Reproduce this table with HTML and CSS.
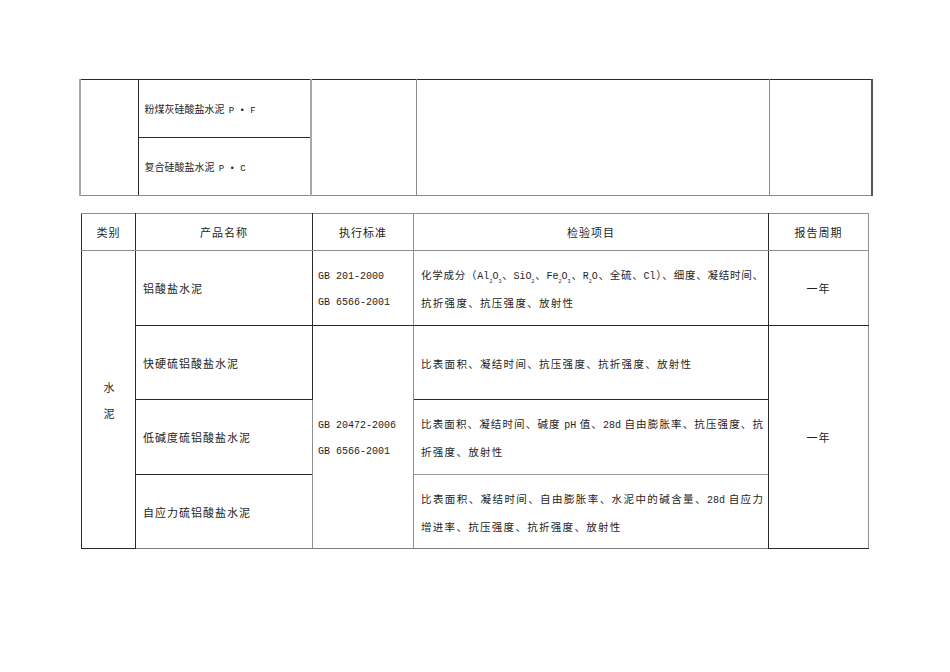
FILE: index.html
```html
<!DOCTYPE html>
<html lang="zh-CN">
<head>
<meta charset="utf-8">
<title>水泥检验项目</title>
<link rel="stylesheet" href="styles.css">
</head>
<body>
<div class="page">
  <table class="t1">
    <colgroup>
      <col class="c1a"><col class="c1b"><col class="c1c"><col class="c1d"><col class="c1e">
    </colgroup>
    <tr class="r1">
      <td rowspan="2" class="gl"></td>
      <td class="name1 bb-dark">粉煤灰硅酸盐水泥 <span class="en">P&nbsp;•&nbsp;F</span></td>
      <td rowspan="2" class="gl gr"></td>
      <td rowspan="2" class="gr"></td>
      <td rowspan="2" class="rthick"></td>
    </tr>
    <tr class="r1">
      <td class="name1">复合硅酸盐水泥 <span class="en">P&nbsp;•&nbsp;C</span></td>
    </tr>
  </table>

  <table class="t2">
    <colgroup>
      <col class="c2a"><col class="c2b"><col class="c2c"><col class="c2d"><col class="c2e">
    </colgroup>
    <tr class="hdr">
      <th>类别</th>
      <th>产品名称</th>
      <th class="gr">执行标准</th>
      <th>检验项目</th>
      <th class="rgray">报告周期</th>
    </tr>
    <tr class="row ra">
      <td rowspan="4" class="cat"><div>水</div><div>泥</div></td>
      <td class="name">铝酸盐水泥</td>
      <td class="std gr"><div>GB 201-2000</div><div>GB 6566-2001</div></td>
      <td class="items">
        <div class="jl">化学成分（<span class="en">Al<sub>2</sub>O<sub>3</sub></span>、<span class="en">SiO<sub>2</sub></span>、<span class="en">Fe<sub>2</sub>O<sub>3</sub></span>、<span class="en">R<sub>2</sub>O</span>、全硫、<span class="en">Cl</span>）、细度、凝结时间、</div>
        <div>抗折强度、抗压强度、放射性</div>
      </td>
      <td class="period rgray">一年</td>
    </tr>
    <tr class="row rb">
      <td class="name">快硬硫铝酸盐水泥</td>
      <td rowspan="3" class="std gr gbot"><div>GB 20472-2006</div><div>GB 6566-2001</div></td>
      <td class="items">
        <div>比表面积、凝结时间、抗压强度、抗折强度、放射性</div>
      </td>
      <td rowspan="3" class="period rgray">一年</td>
    </tr>
    <tr class="row ra">
      <td class="name">低碱度硫铝酸盐水泥</td>
      <td class="items bb-gray">
        <div class="jl">比表面积、凝结时间、碱度 <span class="en">pH</span> 值、<span class="en">28d</span> 自由膨胀率、抗压强度、抗</div>
        <div>折强度、放射性</div>
      </td>
    </tr>
    <tr class="row rb">
      <td class="name">自应力硫铝酸盐水泥</td>
      <td class="items">
        <div class="jl">比表面积、凝结时间、自由膨胀率、水泥中的碱含量、<span class="en">28d</span> 自应力</div>
        <div>增进率、抗压强度、抗折强度、放射性</div>
      </td>
    </tr>
  </table>
</div>
</body>
</html>
```

FILE: styles.css
```css
html, body {
  margin: 0;
  padding: 0;
  background: #ffffff;
}

body {
  font-family: "Noto Sans CJK SC", sans-serif;
  color: #1e1e1e;
  font-size: 11px;
}

.page {
  padding-top: 79px;
}

table {
  border-collapse: collapse;
  table-layout: fixed;
}

td, th {
  border: 1px solid #2a2a2a;
  padding: 0;
  vertical-align: middle;
  font-weight: normal;
}

.en {
  font-family: "Liberation Mono", monospace;
  font-size: 10px;
  letter-spacing: 0;
}

sub {
  font-size: 5px;
  vertical-align: -4px;
  line-height: 0;
}

/* ---------- first table ---------- */
.t1 {
  margin-left: 79px;
  width: 792px;
}

.c1a { width: 58px; }
.c1b { width: 173px; }
.c1c { width: 105px; }
.c1d { width: 353px; }
.c1e { width: 103px; }

.t1 tr.r1 { height: 58px; }

.t1 td {
  border-bottom-color: #8a8a8a;
}

.name1 {
  padding-left: 6px;
  font-size: 10px;
  letter-spacing: 0;
}

.name1 .en {
  font-size: 9px;
  margin-left: 2px;
}

.t1 .bb-dark {
  border-bottom-color: #2a2a2a;
}

.gl { border-left: 2px solid #a8a8a8; }
.t1 .gr { border-right: 1px solid #8a8a8a; }
.rthick { border-right: 2px solid #555555; }

/* ---------- second table ---------- */
.t2 {
  margin-top: 17px;
  margin-left: 81px;
  width: 787px;
  letter-spacing: 1px;
}

.c2a { width: 54px; }
.c2b { width: 177px; }
.c2c { width: 101px; }
.c2d { width: 355px; }
.c2e { width: 100px; }

.t2 th {
  border-top-color: #8f8f8f;
  border-bottom-color: #8f8f8f;
  height: 36px;
  text-align: center;
}

.t2 tr.ra { height: 75px; }
.t2 tr.rb { height: 74px; }

.t2 td:last-child,
.t2 th:last-child,
.t2 .rgray {
  border-right-color: #8f8f8f;
}

.t2 .gr {
  border-right-color: #8f8f8f;
  border-left-color: #8f8f8f;
}

.t2 tr:last-child td,
.t2 .gbot {
  border-bottom-color: #7a7a7a;
}

.cat {
  text-align: center;
  line-height: 26px;
  padding-left: 2px;
}

.name {
  padding-left: 7px;
}

.std {
  padding-left: 5px;
  padding-top: 4px;
  line-height: 26px;
}

.std div {
  font-family: "Liberation Mono", monospace;
  font-size: 10px;
  letter-spacing: 0;
}

.items {
  padding: 2px 5px 0 7px;
  line-height: 26px;
  font-size: 10.5px;
  letter-spacing: 1.3px;
}

.jl {
  letter-spacing: 0;
  text-align: justify;
  text-align-last: justify;
}

.bb-gray {
  border-bottom-color: #9a9a9a !important;
}

.period {
  text-align: center;
}
```
